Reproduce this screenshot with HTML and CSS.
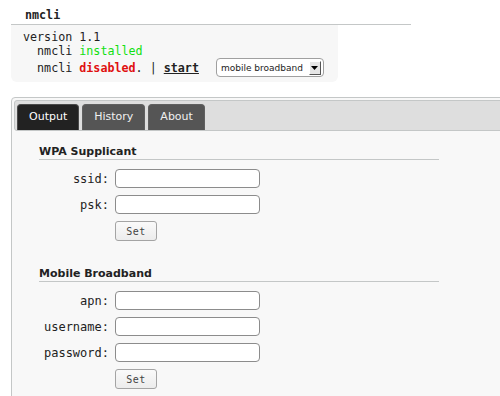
FILE: index.html
```html
<!DOCTYPE html>
<html lang="en">
<head>
    <meta charset="UTF-8">
    <title>nmcli</title>
    <link rel="stylesheet" href="styles.css">
</head>
<body>
    <div class="status">
        <h1 class="status-title">nmcli</h1>
        <div class="status-box">
            <div class="status-line">version 1.1</div>
            <div class="status-line">  nmcli <span class="ok">installed</span></div>
            <div class="status-row">
                <span class="status-line">  nmcli <b class="bad">disabled</b>. | <a href="#" class="start">start</a></span>
                <div class="picker">
                    <span class="picker-text">mobile broadband</span>
                    <span class="picker-arrow">
                        <svg width="7" height="4" viewBox="0 0 7 4"><path d="M0 0h7L3.5 4z" fill="#000"/></svg>
                    </span>
                </div>
            </div>
        </div>
    </div>

    <div class="panel">
        <ul class="tabs">
            <li class="tab active">Output</li>
            <li class="tab">History</li>
            <li class="tab">About</li>
        </ul>
        <div class="panel-body">
            <section class="group">
                <h2>WPA Supplicant</h2>
                <div class="form">
                    <label for="ssid">ssid:</label>
                    <input type="text" id="ssid">
                    <label for="psk">psk:</label>
                    <input type="text" id="psk">
                    <span></span>
                    <button>Set</button>
                </div>
            </section>
            <section class="group">
                <h2>Mobile Broadband</h2>
                <div class="form">
                    <label for="apn">apn:</label>
                    <input type="text" id="apn">
                    <label for="username">username:</label>
                    <input type="text" id="username">
                    <label for="password">password:</label>
                    <input type="password" id="password">
                    <span></span>
                    <button>Set</button>
                </div>
            </section>
        </div>
    </div>
</body>
</html>
```

FILE: styles.css
```css
html, body {
    overflow: hidden;
}
body {
    margin: 0;
    font-family: "DejaVu Sans Mono", monospace;
    font-size: 11.7px;
    color: #222;
    background: #fff;
}
.status {
    margin-left: 11px;
}
.status-title {
    width: 386px;
    margin: 0;
    padding: 8px 0 2px 14px;
    font-size: 11.7px;
    line-height: 14px;
    border-bottom: 1px solid #c4c7c7;
}
.status-box {
    width: 315px;
    padding: 5px 0 5px 12px;
    background: #f7f7f7;
    border-radius: 0 0 6px 6px;
    line-height: 14px;
}
.status-line {
    white-space: pre;
}
.status-row {
    display: flex;
    align-items: center;
    gap: 17px;
    height: 19px;
}
.ok {
    color: #11e011;
}
.bad {
    color: #e01010;
}
.start {
    color: #222;
    font-weight: bold;
    text-decoration: underline;
}
.picker {
    display: flex;
    align-items: center;
    justify-content: space-between;
    width: 108px;
    height: 19px;
    box-sizing: border-box;
    padding: 0 2px 0 4px;
    border: 1px solid #a0a0a0;
    border-radius: 4px;
    background: #fff;
    font-family: "DejaVu Sans", sans-serif;
    font-size: 9px;
}
.picker-arrow {
    display: flex;
    align-items: center;
    justify-content: center;
    width: 12px;
    height: 14px;
    box-sizing: border-box;
    background: #e6e6e6;
    border: 1px solid;
    border-color: #fff #555 #555 #fff;
}
.panel {
    width: 600px;
    margin: 15px 0 0 11px;
    padding: 2px;
    border: 1px solid #c4c7c7;
    border-radius: 4px;
    background: #f8f8f8;
}
.tabs {
    display: flex;
    gap: 3px;
    margin: 0;
    padding: 3px 2px 0;
    list-style: none;
    background: #dedede;
    border: 1px solid #c4c7c7;
    border-radius: 3px;
}
.tab {
    height: 26px;
    box-sizing: border-box;
    padding: 0 11px;
    line-height: 24px;
    font-family: "DejaVu Sans", sans-serif;
    font-size: 11px;
    color: #f0f0f0;
    background: #555;
    border: 1px solid #606060;
    border-bottom: none;
    border-radius: 4px 4px 0 0;
}
.tab.active {
    color: #fff;
    background: #222;
    border-color: #4a4a4a;
}
.panel-body {
    padding: 14px 0 30px 25px;
}
.group {
    width: 400px;
}
.group + .group {
    margin-top: 26px;
}
.group h2 {
    margin: 0 0 9px;
    font-family: "DejaVu Sans", sans-serif;
    font-size: 11px;
    line-height: 14px;
    border-bottom: 1px solid #c4c7c7;
}
.form {
    display: grid;
    grid-template-columns: 70px 145px;
    column-gap: 6px;
    row-gap: 7px;
    align-items: center;
}
.form label {
    text-align: right;
    font-size: 12px;
}
.form input {
    width: 145px;
    height: 19px;
    box-sizing: border-box;
    margin: 0;
    border: 1px solid #8c8c8c;
    border-radius: 4px;
    background: #fff;
}
.form button {
    justify-self: start;
    width: 42px;
    height: 20px;
    margin: 0;
    padding: 0;
    font-family: "DejaVu Sans Mono", monospace;
    font-size: 10px;
    letter-spacing: 0.5px;
    color: #444;
    border: 1px solid #a4a4a4;
    border-radius: 3px;
    background: linear-gradient(#fafafa, #ececec);
}
```
